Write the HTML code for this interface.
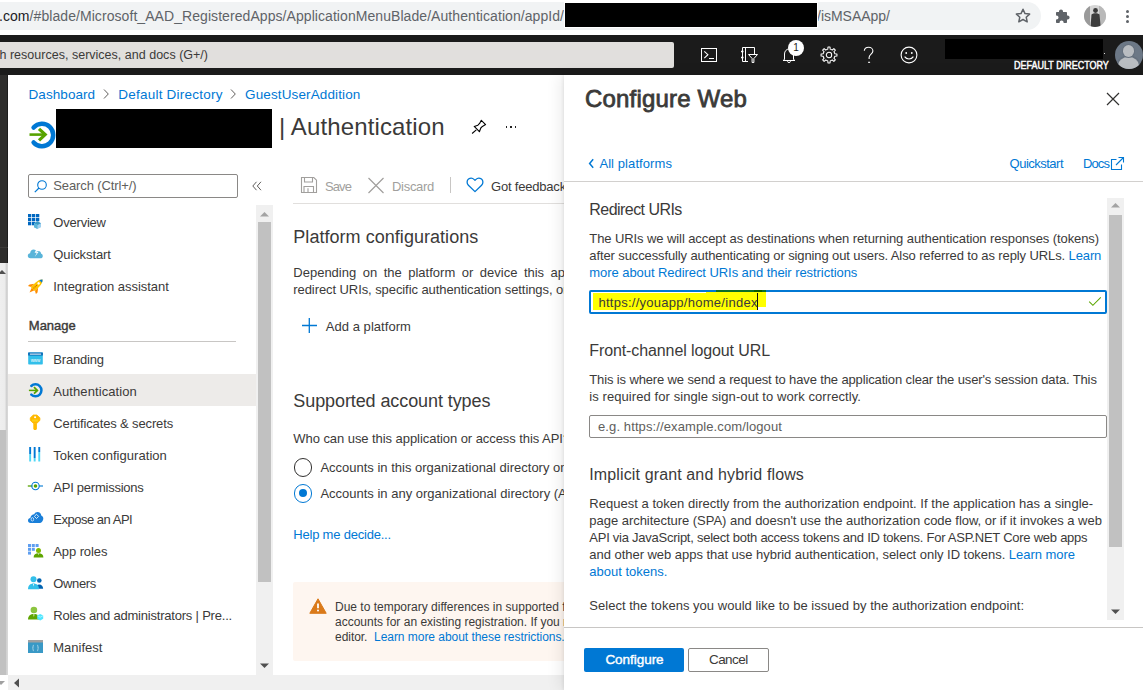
<!DOCTYPE html>
<html><head><meta charset="utf-8">
<style>
*{margin:0;padding:0;box-sizing:border-box}
html,body{width:1143px;height:690px;overflow:hidden;background:#fff;font-family:"Liberation Sans",sans-serif;color:#323130}
.a{position:absolute}
.t{position:absolute;white-space:nowrap;z-index:3}
.p .t{z-index:auto}
svg{position:absolute;overflow:visible}
</style></head><body>
<!-- chrome toolbar -->
<div class="a" style="left:-30px;top:2px;width:1071px;height:28px;border-radius:14px;background:#f1f3f4"></div>
<div class="a" style="left:565px;top:3px;width:252px;height:24px;background:#000;z-index:4;box-shadow:0 0 0 1px #fff"></div>
<div class="a" style="left:0;top:33px;width:1143px;height:2px;background:#fff"></div>
<svg style="left:1015px;top:8px" width="16" height="16" viewBox="0 0 16 16"><path d="M8 1.3l2 4.3 4.6.5-3.4 3.1 1 4.6L8 11.5l-4.2 2.3 1-4.6L1.4 6.1 6 5.6z" fill="none" stroke="#5f6368" stroke-width="1.5" stroke-linejoin="round"/></svg>
<svg style="left:1055px;top:8px" width="16" height="16" viewBox="0 0 16 16"><path d="M6 1.5c1.2 0 2 .9 2 2V4h3c.6 0 1 .4 1 1v2.6h.6c1.1 0 2 .9 2 2s-.9 2-2 2H12V14c0 .6-.4 1-1 1H8.6v-.6c0-1.1-.9-2-2-2s-2 .9-2 2v.6H2c-.6 0-1-.4-1-1v-2.6h.5c1.1 0 2-.9 2-2s-.9-2-2-2H1V5c0-.6.4-1 1-1h2v-.5c0-1.1.9-2 2-2z" fill="#5f6368"/></svg>
<svg style="left:1084px;top:5px" width="22" height="22" viewBox="0 0 22 22"><defs><clipPath id="pc"><circle cx="11" cy="11" r="11"/></clipPath></defs><g clip-path="url(#pc)"><rect width="22" height="22" fill="#d6d6d6"/><rect x="0" y="0" width="6" height="22" fill="#9a9a9a"/><rect x="15" y="0" width="7" height="22" fill="#b9b9b9"/><circle cx="11.5" cy="5.5" r="2.4" fill="#3a3a3a"/><path d="M7.5 9.5c1-1 2.5-1.3 4-1.3s3 .4 4 1.4l1.2 12.5H6.5z" fill="#3d3d3d"/></g></svg>
<div class="a" style="left:1125.5px;top:10px;width:3px;height:3px;border-radius:50%;background:#5f6368"></div>
<div class="a" style="left:1125.5px;top:15px;width:3px;height:3px;border-radius:50%;background:#5f6368"></div>
<div class="a" style="left:1125.5px;top:20px;width:3px;height:3px;border-radius:50%;background:#5f6368"></div>

<!-- azure header -->
<div class="a" style="left:0;top:35px;width:1143px;height:40px;background:#1b1b1b"></div>
<div class="a" style="left:-10px;top:42px;width:684px;height:26px;border-radius:2px;background:#e1dfdd"></div>
<svg style="left:700px;top:47px" width="18" height="16" viewBox="0 0 18 16"><rect x="1.5" y="1.5" width="15" height="13" fill="none" stroke="#fff" stroke-width="1"/><path d="M4.3 4.3l3.6 3.4-3.6 3.4" fill="none" stroke="#fff" stroke-width="1.1"/><path d="M9 11.5h5" stroke="#fff" stroke-width="1"/></svg>
<svg style="left:740px;top:46px" width="19" height="18" viewBox="0 0 19 18"><path d="M14.5 8V1.5h-12v14H8" fill="none" stroke="#fff" stroke-width="1"/><path d="M5.5 1.5v14" stroke="#fff" stroke-width="1"/><path d="M1 5.5h2.5M1 11.5h2.5" stroke="#fff" stroke-width="1.6"/><path d="M8.5 8.5h9l-3.6 4v4h-1.8v-4z" fill="#1b1b1b" stroke="#fff" stroke-width="1" stroke-linejoin="round"/></svg>
<svg style="left:782px;top:47px" width="14" height="17" viewBox="0 0 14 17"><path d="M2.5 12.5V7c0-2.8 2-5 4.5-5s4.5 2.2 4.5 5v5.5l1.5 1H1z" fill="none" stroke="#fff" stroke-width="1" stroke-linejoin="round"/><path d="M5.3 14.3a1.8 1.8 0 0 0 3.4 0" fill="none" stroke="#fff" stroke-width="1"/></svg>
<div class="a" style="left:788px;top:39.5px;width:16px;height:16px;border-radius:50%;background:#fff;color:#1b1a19;font-size:10px;line-height:16px;text-align:center;z-index:4">1</div>
<svg style="left:820px;top:46px" width="18" height="18" viewBox="0 0 18 18"><path d="M14.88 7.81 L16.93 7.96 L16.93 10.04 L14.88 10.19 L14.00 12.32 L15.34 13.88 L13.88 15.34 L12.32 14.00 L10.19 14.88 L10.04 16.93 L7.96 16.93 L7.81 14.88 L5.68 14.00 L4.12 15.34 L2.66 13.88 L4.00 12.32 L3.12 10.19 L1.07 10.04 L1.07 7.96 L3.12 7.81 L4.00 5.68 L2.66 4.12 L4.12 2.66 L5.68 4.00 L7.81 3.12 L7.96 1.07 L10.04 1.07 L10.19 3.12 L12.32 4.00 L13.88 2.66 L15.34 4.12 L14.00 5.68z" fill="none" stroke="#fff" stroke-width="1.05" stroke-linejoin="round"/><circle cx="9" cy="9" r="2.7" fill="none" stroke="#fff" stroke-width="1.05"/></svg>
<svg style="left:863px;top:46px" width="12" height="18" viewBox="0 0 12 18"><path d="M1.3 4.8C1.5 2.6 3.3 1.2 5.6 1.2c2.5 0 4.3 1.7 4.3 3.8 0 2.7-3.8 3.6-3.8 6.5v1.4" fill="none" stroke="#fff" stroke-width="1.1"/><path d="M5.1 16.3h2" stroke="#fff" stroke-width="1.1"/></svg>
<svg style="left:900px;top:46px" width="18" height="18" viewBox="0 0 18 18"><circle cx="9" cy="9" r="7.9" fill="none" stroke="#fff" stroke-width="1.1"/><circle cx="6.2" cy="7" r=".9" fill="#fff"/><circle cx="11.8" cy="7" r=".9" fill="#fff"/><path d="M4.6 10.6c1.1 1.6 2.6 2.4 4.4 2.4s3.3-.8 4.4-2.4" fill="none" stroke="#fff" stroke-width="1.1"/></svg>
<div class="a" style="left:945px;top:39px;width:158px;height:20px;background:#000"></div>
<div class="a" style="left:1103.5px;top:52.5px;width:1.5px;height:1.5px;background:#ddd"></div>
<div class="a" style="left:1114.5px;top:41px;width:28px;height:28px;border-radius:50%;background:#6c7886;overflow:hidden">
 <div class="a" style="left:3.5px;top:16px;width:21px;height:17px;border-radius:50%;background:#b9bdc1;box-shadow:0 -1px 0 1px #66717e"></div>
 <div class="a" style="left:8.3px;top:4.4px;width:11.5px;height:12px;border-radius:50%;background:#b9bdc1;box-shadow:0 0 0 1px #66717e"></div>
</div>

<!-- left strip -->
<div class="a" style="left:0;top:247px;width:8px;height:1px;background:#3b3a39;z-index:1"></div>
<div class="a" style="left:0;top:75px;width:8px;height:188px;background:#2e2d2c;box-shadow:inset -1px 0 0 #1d1d1d"></div>
<div class="a" style="left:0;top:263px;width:8px;height:412px;background:linear-gradient(90deg,#efefef 0,#ececec 60%,#c9c9c9 88%,#e6e6e6 100%)"></div>
<div class="a" style="left:0;top:430px;width:6px;height:245px;background:#c1c1c1"></div>
<svg style="left:-2px;top:269px" width="8" height="6" viewBox="0 0 8 6"><path d="M0 5l4-4 4 4z" fill="#505050"/></svg>
<svg style="left:-3px;top:680px" width="8" height="6" viewBox="0 0 8 6"><path d="M0 1h8l-4 4z" fill="#a0a0a0"/></svg>

<!-- horizontal scrollbar -->
<div class="a" style="left:8px;top:675px;width:600px;height:15px;background:#f0f0f0"></div>
<svg style="left:13px;top:678px" width="8" height="10" viewBox="0 0 8 10"><path d="M6 0.5v9L1 5z" fill="#505050"/></svg>

<!-- sidebar -->
<svg style="left:102px;top:88px" width="8" height="12" viewBox="0 0 8 12"><path d="M2 1.5l4.3 4.5L2 10.5" fill="none" stroke="#605e5c" stroke-width="1"/></svg>
<svg style="left:229px;top:88px" width="8" height="12" viewBox="0 0 8 12"><path d="M2 1.5l4.3 4.5L2 10.5" fill="none" stroke="#605e5c" stroke-width="1"/></svg>
<svg style="left:28px;top:120px" width="28" height="30" viewBox="0 0 28 30"><path d="M5.6 7.6A11.2 11.2 0 1 1 5.6 22.4" fill="none" stroke="#0078d4" stroke-width="4.5" stroke-linecap="round"/><path d="M1.5 14.6h16" stroke="#57a300" stroke-width="2.6"/><path d="M11 8.8l6.2 5.8-6.2 5.8" fill="none" stroke="#57a300" stroke-width="3.2"/></svg>
<div class="a" style="left:56px;top:109px;width:216px;height:39px;background:#000;z-index:4"></div>
<svg style="left:470px;top:118px" width="18" height="18" viewBox="0 0 18 18"><path d="M2.1 15.5l4.2-3.7" stroke="#000" stroke-width="1.1"/><path d="M11.3 2.3L15.6 6.6 12.4 8.4 10.8 10 9.4 13.7 4.2 8.4 7.9 7.2 9.6 5.4z" fill="none" stroke="#000" stroke-width="1.1" stroke-linejoin="round"/></svg>
<div class="a" style="left:505.7px;top:126.2px;width:1.6px;height:1.6px;background:#222"></div>
<div class="a" style="left:510.1px;top:126.2px;width:1.6px;height:1.6px;background:#222"></div>
<div class="a" style="left:514.7px;top:126.2px;width:1.6px;height:1.6px;background:#222"></div>
<div class="a" style="left:28px;top:174px;width:210px;height:24px;border:1px solid #8a8886;border-radius:2px"></div>
<svg style="left:33px;top:179px" width="15" height="15" viewBox="0 0 15 15"><circle cx="9" cy="6" r="4.3" fill="none" stroke="#0078d4" stroke-width="1.1"/><path d="M6 9L1.8 13.2" stroke="#0078d4" stroke-width="1.2"/></svg>
<svg style="left:251px;top:180px" width="12" height="12" viewBox="0 0 12 12"><path d="M5.5 1.8L1.8 6l3.7 4.2M10 1.8L6.3 6l3.7 4.2" fill="none" stroke="#605e5c" stroke-width="1"/></svg>
<!-- nav icons -->
<div class="a" style="left:8px;top:374px;width:248px;height:32px;background:#edebe9"></div>
<svg style="left:27px;top:213px" width="16" height="16" viewBox="0 0 16 16"><g fill="#0067c0"><rect x="1" y="1" width="3.3" height="3.3"/><rect x="5" y="1" width="3.3" height="3.3"/><rect x="9" y="1" width="3.3" height="3.3"/><rect x="1" y="5" width="3.3" height="3.3"/><rect x="5" y="5" width="3.3" height="3.3"/><rect x="9" y="5" width="3.3" height="3.3"/><rect x="1" y="9" width="3.3" height="3.3"/><rect x="5" y="9" width="3.3" height="3.3"/></g><path d="M7 10.2l3.5-1.9 3.5 1.9v4l-3.5 1.8L7 14.2z" fill="#9fd0ef"/><path d="M7 10.2l3.5 1.9 3.5-1.9-3.5-1.9z" fill="#3999c6"/><path d="M7 10.2l3.5 1.9V16L7 14.2z" fill="#59b4d9"/></svg>
<svg style="left:27px;top:246px" width="16" height="14" viewBox="0 0 16 14"><path d="M3.4 12.3C1.6 12.3.8 11 .8 9.8c0-1.4 1-2.4 2.3-2.5C3.2 5 4.8 3.6 6.6 3.6c1.4 0 2.5.7 3.2 1.8.5-.3 1-.4 1.5-.4 1.6 0 2.8 1.2 2.9 2.7 1 .3 1.6 1.1 1.6 2.2 0 1.3-1 2.4-2.4 2.4z" fill="#59b4d9"/><path d="M10.2 1.5L7.6 6.7h2.2L7.7 11l4-5.3H9.5l1.9-3.5z" fill="#fff"/></svg>
<svg style="left:27.5px;top:277.5px" width="16" height="16" viewBox="0 0 16 16"><g transform="translate(8 8) scale(1.2) rotate(45) translate(-8 -8)"><path d="M6.4 11.3h3.2L8 15.6z" fill="#ff8c00"/><path d="M5.8 7.6L3.3 10.9v1.9l2.5-1.4zM10.2 7.6l2.5 3.3v1.9l-2.5-1.4z" fill="#ff8c00"/><path d="M8 .3c1.5 1.3 2.3 3.5 2.3 6.2v5.2H5.7V6.5C5.7 3.8 6.5 1.6 8 .3z" fill="#fcc400"/><path d="M8 .3c.7.6 1.2 1.4 1.6 2.3H6.4C6.8 1.7 7.3.9 8 .3z" fill="#0078d4"/><circle cx="8" cy="4.9" r="1.05" fill="#fff"/><path d="M8 7v4.4" stroke="#d15a00" stroke-width=".8" stroke-dasharray=".9 .6"/></g></svg>
<svg style="left:27px;top:351px" width="16" height="15" viewBox="0 0 16 15"><rect x="1.2" y="1.5" width="14.6" height="12" rx=".8" fill="#32bfea"/><rect x="1.2" y="1.5" width="14.6" height="3" fill="#0063b1"/><rect x="2.8" y="2.6" width="11.4" height="1" fill="#fff"/><text x="8.5" y="10.8" font-size="4.5" fill="#fff" text-anchor="middle" font-family="Liberation Sans">www</text></svg>
<svg style="left:28px;top:382px" width="16" height="17" viewBox="0 0 16 17"><path d="M3.3 4A6 6 0 1 1 3.3 12.7" fill="none" stroke="#0078d4" stroke-width="2.5" stroke-linecap="round"/><path d="M.9 8.4h8.5" stroke="#57a300" stroke-width="1.5"/><path d="M6 5.2l3.3 3.2L6 11.6" fill="none" stroke="#57a300" stroke-width="1.8"/></svg>
<svg style="left:28px;top:414px" width="16" height="17" viewBox="0 0 16 17"><path d="M5.3 1h3.6l3 2.8v2.6l-3 2.9H5.3l-3-2.9V3.8z" fill="#ffb900" stroke="#ffb900" stroke-width=".8" stroke-linejoin="round"/><path d="M5.3 9.2h3.6v5.8l-.9 1H6.2l-.9-1z" fill="#ffb900"/><path d="M4 6.5h6.2" stroke="#fcd116" stroke-width="2"/><circle cx="7.1" cy="3.3" r="1.05" fill="#fff"/></svg>
<svg style="left:28px;top:446px" width="16" height="17" viewBox="0 0 16 17"><g fill="#0078d4"><rect x="1.2" y="1" width="1.9" height="7"/><rect x="5.7" y="1" width="1.9" height="11"/><rect x="10.3" y="1" width="1.9" height="5"/></g><g fill="#50d7f5"><rect x="1.2" y="8" width="1.9" height="7.5"/><rect x="5.7" y="12" width="1.9" height="3.5"/><rect x="10.3" y="6" width="1.9" height="9.5"/></g></svg>
<svg style="left:27px;top:479px" width="17" height="14" viewBox="0 0 17 14"><path d="M.8 7h4.6" stroke="#57a300" stroke-width="1.3"/><circle cx="8.5" cy="7" r="3.7" fill="none" stroke="#0078d4" stroke-width="1.1"/><circle cx="8.5" cy="7" r="1.8" fill="#57a300"/><path d="M12.2 7h3.8" stroke="#0078d4" stroke-width="1.1"/></svg>
<svg style="left:27px;top:511px" width="17" height="14" viewBox="0 0 17 14"><path d="M3.6 12.1C1.9 12.1 1 10.8 1 9.5c0-1.4 1-2.4 2.3-2.5C3.7 4.7 5.4 3.3 7.3 3.3c.4-1.4 1.9-2.2 3.3-2.2 2 0 3.5 1.5 3.6 3.5 1.3.4 2.1 1.6 2.1 3 0 2.1-1.6 4.5-3.6 4.5z" fill="#1a7fd9"/><ellipse cx="5.4" cy="8.3" rx="1.3" ry="1.7" fill="none" stroke="#fff" stroke-width=".8" opacity=".85"/><path d="M9.5 3.3l2.1 2.1-2.1 2.1-2.1-2.1z" fill="none" stroke="#fff" stroke-width=".9" opacity=".9"/></svg>
<svg style="left:27px;top:543px" width="17" height="15" viewBox="0 0 17 15"><g fill="#5e9ef0"><rect x="1" y="1" width="3" height="3"/><rect x="4.8" y="1" width="3" height="3"/><rect x="8.6" y="1" width="3" height="3"/><rect x="1" y="4.8" width="3" height="3"/><rect x="4.8" y="4.8" width="3" height="3"/><rect x="1" y="8.6" width="3" height="3"/></g><circle cx="11.5" cy="7.5" r="2.5" fill="#7fba00"/><path d="M6.6 14.5c0-2.8 2-4.2 4.9-4.2s4.9 1.4 4.9 4.2z" fill="#5ea500"/><path d="M11 10.5l.5 1.8.5-1.8z" fill="#fff"/></svg>
<svg style="left:27px;top:575px" width="17" height="15" viewBox="0 0 17 15"><circle cx="12.3" cy="5.5" r="2.3" fill="#0063b1"/><path d="M8.5 13.8c0-2.6 1.6-4.2 3.8-4.2s3.8 1.6 3.8 4.2z" fill="#0063b1"/><circle cx="6.5" cy="4.3" r="3" fill="#32bfea"/><path d="M1 14.2C1 10.6 3.2 8.5 6.5 8.5s5.5 2.1 5.5 5.7z" fill="#32bfea"/><path d="M6 9l.5 2.5.5-2.5z" fill="#fff"/></svg>
<svg style="left:27px;top:606px" width="17" height="16" viewBox="0 0 17 16"><circle cx="6.9" cy="4" r="3.3" fill="#8cc53f"/><path d="M1 13.5C1 9.8 3.5 8 6.9 8s5.9 1.8 5.9 5.5z" fill="#5ea500"/><path d="M6.3 8.3l.6 2.8.6-2.8z" fill="#fff"/><path d="M10.2 9.6l3-1.6 3 1.6v3.2l-3 1.6-3-1.6z" fill="#50e6ff"/><path d="M10.2 9.6l3 1.6 3-1.6" fill="none" stroke="#fff" stroke-width=".5"/></svg>
<svg style="left:28px;top:640px" width="15" height="14" viewBox="0 0 15 14"><rect x="0" y="0" width="15" height="13" fill="#3999c6"/><rect x="0" y="0" width="15" height="2.5" fill="#a0a1a2"/><path d="M5.8 5.2c-.9 0-.7 1.1-.7 1.8s-.5 1-.5 1 .5.3.5 1-.2 1.8.7 1.8M9.2 5.2c.9 0 .7 1.1.7 1.8s.5 1 .5 1-.5.3-.5 1 .2 1.8-.7 1.8" fill="none" stroke="#fff" stroke-width=".7" opacity=".8"/></svg>
<div class="a" style="left:28px;top:341px;width:208px;height:1px;background:#c8c6c4"></div>
<!-- sidebar scrollbar -->
<div class="a" style="left:256px;top:205px;width:17px;height:470px;background:#f0f0f0"></div>
<div class="a" style="left:258px;top:222px;width:13px;height:360px;background:#c1c1c1"></div>
<svg style="left:260px;top:210.5px" width="9" height="6" viewBox="0 0 9 6"><path d="M0 5.5L4.5 1 9 5.5z" fill="#a3a3a3"/></svg>
<svg style="left:260px;top:663px" width="9" height="6" viewBox="0 0 9 6"><path d="M0 .5h9L4.5 5z" fill="#505050"/></svg>

<!-- main content -->
<svg style="left:300px;top:176px" width="18" height="18" viewBox="0 0 18 18"><path d="M1.5 1.5h12.3l2.7 2.7v12.3h-15z" fill="none" stroke="#a19f9d" stroke-width="1.1"/><path d="M4.5 1.5v4.5h8V1.5M4 16.5v-6h9.5v6M8 12.3v4.2" fill="none" stroke="#a19f9d" stroke-width="1.1"/></svg>
<svg style="left:367px;top:177px" width="18" height="17" viewBox="0 0 18 17"><path d="M1.5 1l15 15M16.5 1l-15 15" stroke="#a19f9d" stroke-width="1.2"/></svg>
<div class="a" style="left:450px;top:176.5px;width:1px;height:16.5px;background:#c8c6c4"></div>
<svg style="left:466px;top:177px" width="18" height="16" viewBox="0 0 18 16"><path d="M9 14.6L2.4 8.2C.6 6.4.7 3.6 2.5 2.1 4.2.8 6.7 1 8.3 2.6l.7.7.7-.7c1.6-1.6 4.1-1.8 5.8-.5 1.8 1.5 1.9 4.3.1 6.1z" fill="none" stroke="#0078d4" stroke-width="1.3" stroke-linejoin="round"/></svg>
<div class="a" style="left:293px;top:203px;width:300px;height:1px;background:#e1dfdd"></div>
<svg style="left:301px;top:317px" width="17" height="17" viewBox="0 0 17 17"><path d="M8.3 1v15M1 8.5h15" stroke="#0078d4" stroke-width="1.3"/></svg>
<div class="a" style="left:293.5px;top:458px;width:18.5px;height:18.5px;border:1px solid #323130;border-radius:50%"></div>
<div class="a" style="left:293.5px;top:484px;width:18.5px;height:18.5px;border:1px solid #0078d4;border-radius:50%"></div>
<div class="a" style="left:298.75px;top:489.25px;width:8px;height:8px;background:#0078d4;border-radius:50%"></div>
<div class="a" style="left:293px;top:582px;width:300px;height:79px;background:#fef6f0;border-radius:2px"></div>
<svg style="left:309px;top:598px" width="18" height="16" viewBox="0 0 18 16"><path d="M9 .8l8.2 14.5H.8z" fill="#da7a1a" stroke="#da7a1a" stroke-width="1" stroke-linejoin="round"/><path d="M9 5.5v4.8" stroke="#fff" stroke-width="1.8"/><circle cx="9" cy="12.6" r="1" fill="#fff"/></svg>

<div class="t" style="left:-1.0px;top:9.15px;font-size:14px;line-height:14px;color:#5f6368;letter-spacing:0.066px;"><span style="color:#202124">.com</span>/#blade/Microsoft_AAD_RegisteredApps/ApplicationMenuBlade/Authentication/appId/</div>
<div class="t" style="left:817.0px;top:9.15px;font-size:14px;line-height:14px;color:#5f6368;letter-spacing:-0.014px;">/isMSAApp/</div>
<div class="t" style="left:-0.5px;top:49.42px;font-size:12.5px;line-height:12.5px;color:#3b3a39;letter-spacing:0.012px;">h resources, services, and docs (G+/)</div>
<div class="t" style="left:1014.0px;top:60.53px;font-size:10px;line-height:10px;color:#ffffff;-webkit-text-stroke:0.45px #ffffff;transform:scaleX(0.8998);transform-origin:0 0;">DEFAULT DIRECTORY</div>
<div class="t" style="left:28.5px;top:87.57px;font-size:13.5px;line-height:13.5px;color:#0078d4;letter-spacing:0.073px;">Dashboard</div>
<div class="t" style="left:118.3px;top:87.57px;font-size:13.5px;line-height:13.5px;color:#0078d4;letter-spacing:0.222px;">Default Directory</div>
<div class="t" style="left:245.0px;top:87.57px;font-size:13.5px;line-height:13.5px;color:#0078d4;letter-spacing:0.129px;">GuestUserAddition</div>
<div class="t" style="left:279.0px;top:114.88px;font-size:24px;line-height:24px;color:#3b3a39;letter-spacing:0.124px;">| Authentication</div>
<div class="t" style="left:53.3px;top:179.49px;font-size:13px;line-height:13px;color:#605e5c;letter-spacing:-0.112px;">Search (Ctrl+/)</div>
<div class="t" style="left:53.3px;top:215.99px;font-size:13px;line-height:13px;color:#3b3a39;letter-spacing:-0.210px;">Overview</div>
<div class="t" style="left:53.3px;top:247.99px;font-size:13px;line-height:13px;color:#3b3a39;letter-spacing:-0.101px;">Quickstart</div>
<div class="t" style="left:53.3px;top:279.99px;font-size:13px;line-height:13px;color:#3b3a39;letter-spacing:-0.040px;">Integration assistant</div>
<div class="t" style="left:53.3px;top:352.99px;font-size:13px;line-height:13px;color:#3b3a39;letter-spacing:-0.205px;">Branding</div>
<div class="t" style="left:53.3px;top:384.99px;font-size:13px;line-height:13px;color:#3b3a39;letter-spacing:0.079px;">Authentication</div>
<div class="t" style="left:53.3px;top:416.99px;font-size:13px;line-height:13px;color:#3b3a39;letter-spacing:-0.142px;">Certificates &amp; secrets</div>
<div class="t" style="left:53.3px;top:448.99px;font-size:13px;line-height:13px;color:#3b3a39;letter-spacing:0.045px;">Token configuration</div>
<div class="t" style="left:53.3px;top:480.99px;font-size:13px;line-height:13px;color:#3b3a39;letter-spacing:-0.248px;">API permissions</div>
<div class="t" style="left:53.3px;top:512.99px;font-size:13px;line-height:13px;color:#3b3a39;letter-spacing:-0.492px;">Expose an API</div>
<div class="t" style="left:53.3px;top:544.99px;font-size:13px;line-height:13px;color:#3b3a39;letter-spacing:-0.102px;">App roles</div>
<div class="t" style="left:53.3px;top:576.99px;font-size:13px;line-height:13px;color:#3b3a39;letter-spacing:-0.365px;">Owners</div>
<div class="t" style="left:53.3px;top:608.99px;font-size:13px;line-height:13px;color:#3b3a39;letter-spacing:-0.205px;">Roles and administrators | Pre...</div>
<div class="t" style="left:53.3px;top:640.99px;font-size:13px;line-height:13px;color:#3b3a39;letter-spacing:-0.016px;">Manifest</div>
<div class="t" style="left:28.8px;top:318.99px;font-size:13px;line-height:13px;color:#3b3a39;-webkit-text-stroke:0.4px #3b3a39;letter-spacing:0.003px;">Manage</div>
<div class="t" style="left:325.0px;top:179.99px;font-size:13px;line-height:13px;color:#a19f9d;letter-spacing:-0.908px;">Save</div>
<div class="t" style="left:392.0px;top:179.99px;font-size:13px;line-height:13px;color:#a19f9d;letter-spacing:-0.295px;">Discard</div>
<div class="t" style="left:491.0px;top:179.99px;font-size:13px;line-height:13px;color:#3b3a39;letter-spacing:-0.197px;">Got feedback?</div>
<div class="t" style="left:293.3px;top:227.76px;font-size:18px;line-height:18px;color:#3b3a39;letter-spacing:0.040px;">Platform configurations</div>
<div class="t" style="left:293.3px;top:265.99px;font-size:13px;line-height:13px;color:#3b3a39;word-spacing:2.9px;">Depending on the platform or device this application is targeting, additional configuration may be required such as</div>
<div class="t" style="left:293.3px;top:282.99px;font-size:13px;line-height:13px;color:#3b3a39;letter-spacing:-0.08px;">redirect URIs, specific authentication settings, or fields specific to the platform.</div>
<div class="t" style="left:325.7px;top:319.99px;font-size:13px;line-height:13px;color:#3b3a39;letter-spacing:0.054px;">Add a platform</div>
<div class="t" style="left:293.3px;top:391.76px;font-size:18px;line-height:18px;color:#3b3a39;letter-spacing:-0.093px;">Supported account types</div>
<div class="t" style="left:293.3px;top:431.99px;font-size:13px;line-height:13px;color:#3b3a39;letter-spacing:-0.06px;">Who can use this application or access this API?</div>
<div class="t" style="left:320.4px;top:461.49px;font-size:13px;line-height:13px;color:#3b3a39;">Accounts in this organizational directory only (Default Directory only - Single tenant)</div>
<div class="t" style="left:320.4px;top:487.19px;font-size:13px;line-height:13px;color:#3b3a39;">Accounts in any organizational directory (Any Azure AD directory - Multitenant)</div>
<div class="t" style="left:293.3px;top:527.99px;font-size:13px;line-height:13px;color:#0078d4;letter-spacing:-0.210px;">Help me decide...</div>
<div class="t" style="left:335.0px;top:601.14px;font-size:12px;line-height:12px;color:#3b3a39;">Due to temporary differences in supported functionality, we don't allow personal Microsoft</div>
<div class="t" style="left:335.0px;top:615.84px;font-size:12px;line-height:12px;color:#3b3a39;">accounts for an existing registration. If you need to enable personal accounts, you can do so using the manifest</div>
<div class="t" style="left:335.0px;top:630.64px;font-size:12px;line-height:12px;color:#3b3a39;letter-spacing:-0.04px;">editor.&nbsp; <span style="color:#0078d4">Learn more about these restrictions.</span></div>

<!-- panel -->
<div class="a p" style="left:564px;top:75px;width:579px;height:615px;background:#fff;z-index:10;box-shadow:-4px 0 14px rgba(0,0,0,.08),-1px 0 3px rgba(0,0,0,.07)">
</div>
<div class="a" style="left:0;top:0;width:1143px;height:690px;z-index:11;pointer-events:none">
 <svg style="left:1106px;top:92px" width="14" height="14" viewBox="0 0 14 14"><path d="M1 1l12 12M13 1L1 13" stroke="#323130" stroke-width="1.2"/></svg>
 <svg style="left:588px;top:158px" width="7" height="11" viewBox="0 0 7 11"><path d="M5.2 1.2L1.6 5.5l3.6 4.3" fill="none" stroke="#0078d4" stroke-width="1.5"/></svg>
 <svg style="left:1110px;top:156px" width="15" height="15" viewBox="0 0 15 15"><path d="M6.5 3.5H1.5v10h10v-5" fill="none" stroke="#0078d4" stroke-width="1.1"/><path d="M6 9l7.5-7.5M8.5 1.5h5v5" fill="none" stroke="#0078d4" stroke-width="1.1"/></svg>
 <div class="a" style="left:564px;top:181px;width:579px;height:1px;background:#d2d0ce"></div>
 <div class="a" style="left:1107px;top:198px;width:17px;height:422px;background:#f0f0f0"></div>
 <div class="a" style="left:1109px;top:215px;width:13px;height:331.5px;background:#c1c1c1"></div>
 <svg style="left:1111px;top:202px" width="9" height="6" viewBox="0 0 9 6"><path d="M0 5.5L4.5 1 9 5.5z" fill="#a3a3a3"/></svg>
 <svg style="left:1111px;top:609px" width="9" height="6" viewBox="0 0 9 6"><path d="M0 .5h9L4.5 5z" fill="#505050"/></svg>
 <div class="a" style="left:589px;top:290px;width:518px;height:24px;border:2px solid #0078d4;border-radius:2px"></div>
 <div class="a" style="left:593px;top:292.5px;width:165px;height:17px;background:#ffff00"></div>
 <div class="a" style="left:757px;top:292px;width:9px;height:15px;background:#ffff00"></div>
 <div class="a" style="left:716px;top:290px;width:50px;height:2px;background:#0b6e2a"></div><div class="a" style="left:754px;top:290px;width:8px;height:2px;background:#0a5a00"></div><div class="a" style="left:706px;top:292px;width:52px;height:1px;background:#ffff00"></div>
 <div class="a" style="left:757px;top:293px;width:1.2px;height:17px;background:#111"></div>
 <svg style="left:1088px;top:296px" width="14" height="11" viewBox="0 0 14 11"><path d="M1.2 5.6l3.7 3.7L12.8 1.4" fill="none" stroke="#5ba600" stroke-width="1.05"/></svg>
 <div class="a" style="left:589px;top:414.5px;width:518px;height:23.5px;border:1px solid #8a8886;border-radius:2px"></div>
 <div class="a" style="left:564px;top:627px;width:579px;height:1px;background:#c8c6c4"></div>
 <div class="a" style="left:584px;top:648px;width:100px;height:24px;background:#0078d4;border-radius:2px"></div>
 <div class="a" style="left:688px;top:648px;width:81px;height:24px;border:1px solid #8a8886;border-radius:2px"></div>
 <div class="t" style="left:585.0px;top:86.98px;font-size:24px;line-height:24px;color:#3b3a39;-webkit-text-stroke:0.8px #3b3a39;letter-spacing:0.181px;">Configure Web</div>
<div class="t" style="left:599.4px;top:156.99px;font-size:13px;line-height:13px;color:#0078d4;letter-spacing:0.083px;">All platforms</div>
<div class="t" style="left:1009.6px;top:156.99px;font-size:13px;line-height:13px;color:#0078d4;letter-spacing:-0.511px;">Quickstart</div>
<div class="t" style="left:1083.0px;top:156.99px;font-size:13px;line-height:13px;color:#0078d4;letter-spacing:-0.905px;">Docs</div>
<div class="t" style="left:589.3px;top:202.45px;font-size:16px;line-height:16px;color:#3b3a39;letter-spacing:-0.544px;">Redirect URIs</div>
<div class="t" style="left:589.3px;top:231.99px;font-size:13px;line-height:13px;color:#3b3a39;letter-spacing:-0.087px;">The URIs we will accept as destinations when returning authentication responses (tokens)</div>
<div class="t" style="left:589.3px;top:248.99px;font-size:13px;line-height:13px;color:#3b3a39;letter-spacing:-0.113px;">after successfully authenticating or signing out users. Also referred to as reply URLs. <span style="color:#0078d4">Learn</span></div>
<div class="t" style="left:589.3px;top:265.99px;font-size:13px;line-height:13px;color:#0078d4;letter-spacing:-0.063px;">more about Redirect URIs and their restrictions</div>
<div class="t" style="left:598.4px;top:295.99px;font-size:13px;line-height:13px;color:#3b3a39;letter-spacing:0.272px;">https://youapp/home/index</div>
<div class="t" style="left:589.3px;top:343.05px;font-size:16px;line-height:16px;color:#3b3a39;letter-spacing:-0.105px;">Front-channel logout URL</div>
<div class="t" style="left:589.3px;top:372.99px;font-size:13px;line-height:13px;color:#3b3a39;letter-spacing:-0.134px;">This is where we send a request to have the application clear the user's session data. This</div>
<div class="t" style="left:589.3px;top:389.99px;font-size:13px;line-height:13px;color:#3b3a39;letter-spacing:0.078px;">is required for single sign-out to work correctly.</div>
<div class="t" style="left:598.0px;top:419.99px;font-size:13px;line-height:13px;color:#605e5c;letter-spacing:0.108px;">e.g. https://example.com/logout</div>
<div class="t" style="left:589.3px;top:467.45px;font-size:16px;line-height:16px;color:#3b3a39;letter-spacing:0.127px;">Implicit grant and hybrid flows</div>
<div class="t" style="left:589.3px;top:496.99px;font-size:13px;line-height:13px;color:#3b3a39;letter-spacing:0.026px;">Request a token directly from the authorization endpoint. If the application has a single-</div>
<div class="t" style="left:589.3px;top:513.99px;font-size:13px;line-height:13px;color:#3b3a39;letter-spacing:-0.030px;">page architecture (SPA) and doesn't use the authorization code flow, or if it invokes a web</div>
<div class="t" style="left:589.3px;top:530.99px;font-size:13px;line-height:13px;color:#3b3a39;letter-spacing:-0.253px;">API via JavaScript, select both access tokens and ID tokens. For ASP.NET Core web apps</div>
<div class="t" style="left:589.3px;top:547.99px;font-size:13px;line-height:13px;color:#3b3a39;letter-spacing:-0.034px;">and other web apps that use hybrid authentication, select only ID tokens. <span style="color:#0078d4">Learn more</span></div>
<div class="t" style="left:589.3px;top:564.99px;font-size:13px;line-height:13px;color:#0078d4;letter-spacing:-0.004px;">about tokens.</div>
<div class="t" style="left:589.3px;top:598.99px;font-size:13px;line-height:13px;color:#3b3a39;letter-spacing:0.024px;">Select the tokens you would like to be issued by the authorization endpoint:</div>
<div class="t" style="left:605.4px;top:652.87px;font-size:13.5px;line-height:13.5px;color:#ffffff;-webkit-text-stroke:0.4px #ffffff;letter-spacing:-0.037px;">Configure</div>
<div class="t" style="left:709.0px;top:652.87px;font-size:13.5px;line-height:13.5px;color:#3b3a39;letter-spacing:-0.570px;">Cancel</div>
</div>
</body></html>
